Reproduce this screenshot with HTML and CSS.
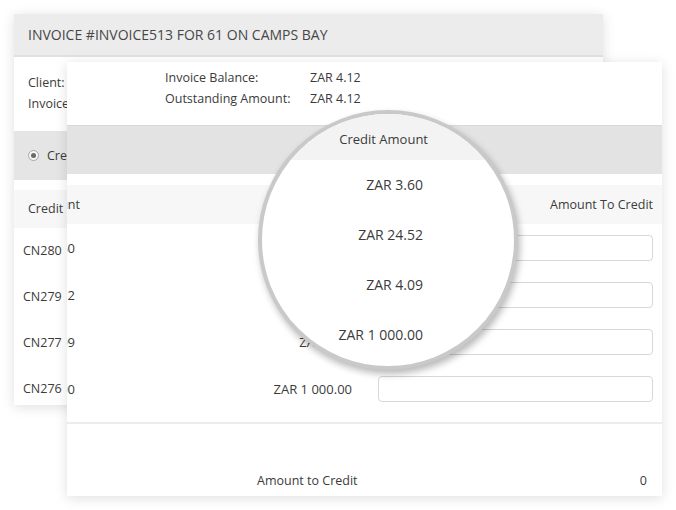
FILE: index.html
```html
<!DOCTYPE html>
<html lang="en">
<head>
<meta charset="utf-8">
<title>Invoice credit</title>
<link rel="stylesheet" href="styles.css">
</head>
<body>
<div class="canvas">
  <section class="card back">
    <header class="back-head">INVOICE #INVOICE513 FOR 61 ON CAMPS BAY</header>
    <div class="back-info">
      <div class="back-line">Client:</div>
      <div class="back-line">Invoice Number:</div>
    </div>
    <div class="back-radio"><span class="radio"></span><span>Credit Notes</span></div>
    <div class="back-thead">Credit Note</div>
    <div class="back-row">CN280</div>
    <div class="back-row">CN279</div>
    <div class="back-row">CN277</div>
    <div class="back-row">CN276</div>
  </section>

  <section class="card front">
    <div class="f-info">
      <div class="f-line"><span class="f-label">Invoice Balance:</span><span>ZAR 4.12</span></div>
      <div class="f-line"><span class="f-label">Outstanding Amount:</span><span>ZAR 4.12</span></div>
    </div>
    <div class="f-band"></div>
    <div class="f-thead">
      <span class="c1 c1-head">Credit Amount</span>
      <span class="c2"></span>
      <span class="c3 c3-head">Amount To Credit</span>
    </div>
    <div class="f-row"><span class="c1">ZAR 3.60</span><span class="c2">ZAR 3.60</span><span class="c3"><span class="field"></span></span></div>
    <div class="f-row"><span class="c1">ZAR 24.52</span><span class="c2">ZAR 24.52</span><span class="c3"><span class="field"></span></span></div>
    <div class="f-row"><span class="c1">ZAR 4.09</span><span class="c2">ZAR 4.09</span><span class="c3"><span class="field"></span></span></div>
    <div class="f-row"><span class="c1">ZAR 1 000.00</span><span class="c2">ZAR 1 000.00</span><span class="c3"><span class="field"></span></span></div>
    <div class="f-foot"><span class="f-foot-label">Amount to Credit</span><span class="f-foot-value">0</span></div>
  </section>

  <div class="lens">
    <div class="lens-head">Credit Amount</div>
    <div class="lens-row">ZAR 3.60</div>
    <div class="lens-row">ZAR 24.52</div>
    <div class="lens-row">ZAR 4.09</div>
    <div class="lens-row">ZAR 1 000.00</div>
  </div>
</div>
</body>
</html>
```

FILE: styles.css
```css
* { box-sizing: border-box; }
html, body { margin: 0; padding: 0; background: #fff; }
body {
  font-family: "Open Sans", "Noto Sans", "Liberation Sans", sans-serif;
  font-size: 12.5px;
  color: #3b3b3b;
}
.canvas {
  position: relative;
  width: 676px;
  height: 510px;
  overflow: hidden;
}
.card {
  position: absolute;
  background: #fff;
  overflow: hidden;
  box-shadow: 0 2px 12px rgba(0, 0, 0, 0.13);
}

/* back card */
.back {
  left: 14px;
  top: 14px;
  width: 589px;
  height: 391px;
}
.back-head {
  height: 43px;
  background: #ececec;
  border-bottom: 2px solid #e1e1e1;
  padding-left: 14px;
  font-size: 14px;
  line-height: 41px;
  color: #474747;
  white-space: nowrap;
}
.back-info {
  padding: 15px 0 17px 14px;
}
.back-line {
  line-height: 21px;
  white-space: nowrap;
}
.back-radio {
  height: 49px;
  background: #e5e5e5;
  display: flex;
  align-items: center;
  gap: 8px;
  padding-left: 14px;
  white-space: nowrap;
}
.radio {
  width: 11px;
  height: 11px;
  border-radius: 50%;
  border: 1px solid #a8a8a8;
  background: #f6f6f6;
  display: flex;
  align-items: center;
  justify-content: center;
}
.radio::after {
  content: "";
  width: 5px;
  height: 5px;
  border-radius: 50%;
  background: #6a6a6a;
}
.back-thead {
  margin-top: 10px;
  height: 38px;
  background: #f7f7f7;
  line-height: 38px;
  padding-left: 14px;
  white-space: nowrap;
}
.back-row {
  height: 46px;
  line-height: 46px;
  padding-left: 9px;
  white-space: nowrap;
}

/* front card */
.front {
  left: 67px;
  top: 62px;
  width: 595px;
  height: 434px;
  padding-right: 9px;
  display: flex;
  flex-direction: column;
}
.f-info {
  height: 63px;
  padding: 5px 0 0 98px;
}
.f-line {
  display: flex;
  line-height: 21px;
  white-space: nowrap;
}
.f-label { width: 145px; }
.f-band {
  height: 49px;
  background: #e3e3e3;
  border-top: 1px solid #d8d8d8;
  margin-right: -9px;
}
.f-thead {
  margin-top: 11px;
  margin-right: -9px;
  padding-right: 9px;
  height: 39px;
  background: #f7f7f7;
  display: flex;
  align-items: center;
}
.c1 {
  width: 100px;
  margin-left: -92px;
  flex: none;
  text-align: right;
  white-space: nowrap;
}
.c1-head {
  width: 110px;
  margin-left: -97px;
}
.c2 {
  flex: 1;
  text-align: right;
  white-space: nowrap;
}
.c3 {
  width: 275px;
  margin-left: 26px;
  flex: none;
  display: flex;
}
.c3-head { justify-content: flex-end; }
.f-row {
  height: 47px;
  display: flex;
  align-items: center;
  font-size: 13px;
}
.field {
  flex: 1;
  height: 26px;
  border: 1px solid #d7d7d7;
  border-radius: 4px;
  background: #fff;
}
.f-foot {
  margin-top: 10px;
  margin-right: -9px;
  border-top: 2px solid #ececec;
  flex: 1;
  display: flex;
  align-items: flex-start;
  justify-content: space-between;
  padding: 48px 15px 0 190px;
  line-height: 18px;
}

/* magnifier */
.lens {
  position: absolute;
  left: 258px;
  top: 110px;
  width: 260px;
  height: 260px;
  border-radius: 50%;
  border: 4px solid #c9c9c9;
  background: #fff;
  overflow: hidden;
  box-shadow: 2px 4px 7px rgba(0, 0, 0, 0.28);
  font-size: 14px;
}
.lens-head {
  height: 46px;
  background: #f4f3f3;
  padding: 16px 86px 0 0;
  line-height: 18px;
  text-align: right;
  font-size: 13px;
}
.lens-row {
  height: 50px;
  line-height: 50px;
  text-align: right;
  padding-right: 91px;
  white-space: nowrap;
}
```
